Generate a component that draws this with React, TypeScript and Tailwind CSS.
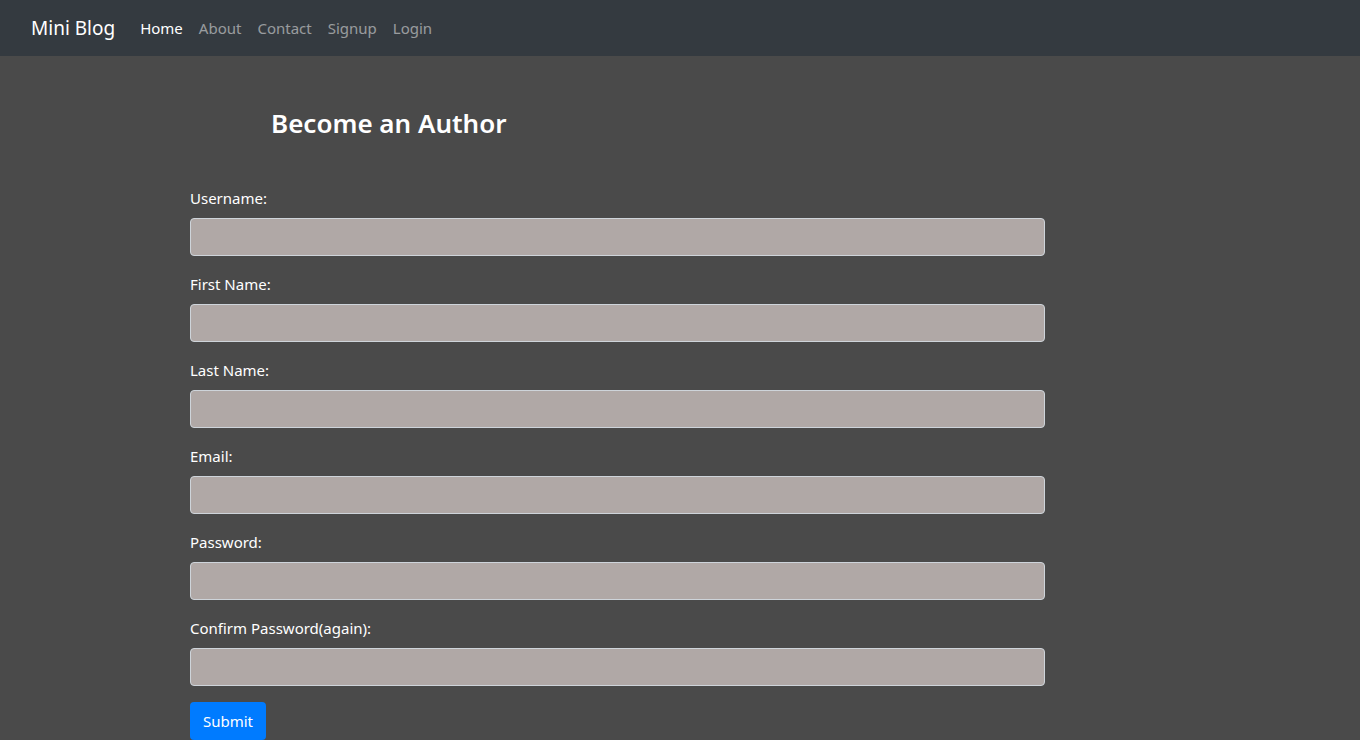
const fields = [
  'Username:',
  'First Name:',
  'Last Name:',
  'Email:',
  'Password:',
  'Confirm Password(again):',
];

const links = ['Home', 'About', 'Contact', 'Signup', 'Login'];

export default function App() {
  return (
    <div className="min-h-screen bg-[#4a4a4a] font-['Noto_Sans',sans-serif] text-white">
      <nav className="flex h-[56px] items-center bg-[#343a40] pl-[31px]">
        <span className="mr-[17px] text-[19px] leading-[30px]">Mini Blog</span>
        <ul className="flex">
          {links.map((l, i) => (
            <li key={l}>
              <a
                href="#"
                className={
                  'block px-[8px] py-[8px] text-[15px] leading-[24px] ' +
                  (i === 0 ? 'text-white' : 'text-white/50')
                }
              >
                {l}
              </a>
            </li>
          ))}
        </ul>
      </nav>

      <main className="pl-[190px]">
        <h3 className="pl-[81px] pt-[51px] text-[26px] font-semibold leading-[32px]">Become an Author</h3>
        <form className="mt-[47px] w-[855px]" onSubmit={(e) => e.preventDefault()}>
          {fields.map((f) => (
            <div key={f} className="mb-[16px]">
              <label className="mb-[8px] block text-[15px] leading-[24px]">{f}</label>
              <input
                type={f.startsWith('Password') || f.startsWith('Confirm') ? 'password' : 'text'}
                className="block h-[38px] w-full rounded-[4px] border border-[#ced4da] bg-[#b0a8a6] px-3 outline-none"
              />
            </div>
          ))}
          <button className="h-[38px] w-[76px] rounded-[4px] bg-[#007bff] text-[15px] leading-[24px] text-white">
            Submit
          </button>
        </form>
      </main>
    </div>
  );
}
